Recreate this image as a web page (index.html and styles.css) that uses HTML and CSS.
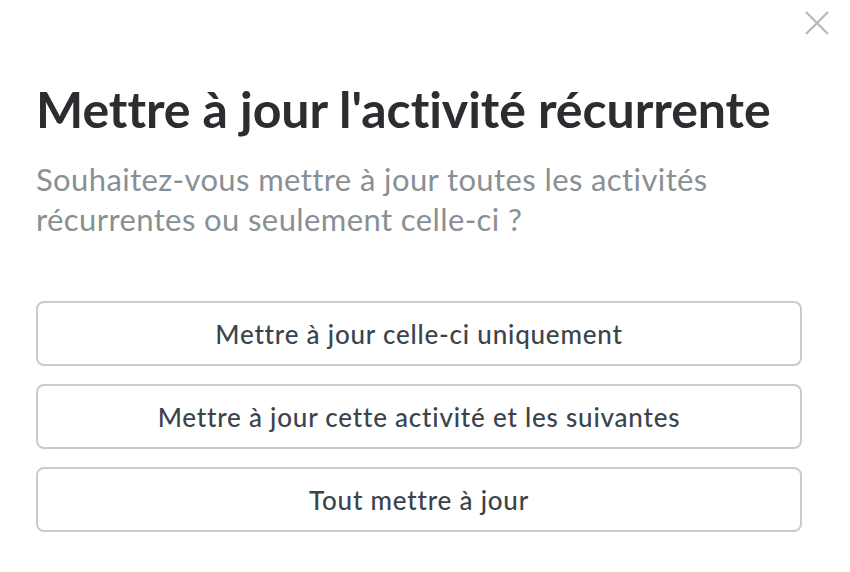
FILE: index.html
```html
<!DOCTYPE html>
<html lang="fr">
<head>
<meta charset="utf-8">
<link rel="stylesheet" href="styles.css">
</head>
<body>
<div class="modal">
  <button class="close" aria-label="Fermer">
    <svg width="24" height="24" viewBox="0 0 24 24"><path d="M1 1L23 23M23 1L1 23" stroke="#b3b8bc" stroke-width="2.2" fill="none"/></svg>
  </button>
  <h1 class="title">Mettre à jour l'activité récurrente</h1>
  <p class="subtitle">Souhaitez-vous mettre à jour toutes les activités récurrentes ou seulement celle-ci ?</p>
  <div class="actions">
    <button class="option">Mettre à jour celle-ci uniquement</button>
    <button class="option">Mettre à jour cette activité et les suivantes</button>
    <button class="option">Tout mettre à jour</button>
  </div>
</div>
</body>
</html>
```
FILE: styles.css
```css
html, body {
  margin: 0;
  padding: 0;
  background: #ffffff;
}
body {
  font-family: Lato, "Open Sans", sans-serif;
}
.modal {
  position: relative;
  width: 850px;
  height: 572px;
  box-sizing: border-box;
  padding: 79px 48px 0 36px;
}
.close {
  position: absolute;
  top: 11px;
  right: 21px;
  padding: 0;
  border: 0;
  background: none;
  line-height: 0;
}
.title {
  margin: 0;
  font-size: 50px;
  font-weight: 700;
  color: #2c2d30;
  line-height: 60px;
  letter-spacing: -0.05px;
}
.subtitle {
  margin: 20px 0 0;
  font-size: 31px;
  line-height: 40px;
  color: #899095;
  letter-spacing: 0.4px;
  max-width: 740px;
}
.actions {
  display: flex;
  flex-direction: column;
  gap: 18px;
  margin-top: 62px;
}
.option {
  box-sizing: border-box;
  height: 65px;
  border: 2px solid #c8ccd0;
  border-radius: 8px;
  background: #fff;
  font-family: Lato, sans-serif;
  font-size: 26px;
  font-weight: 500;
  letter-spacing: 0.8px;
  color: #3a444d;
  padding: 0;
}
```
